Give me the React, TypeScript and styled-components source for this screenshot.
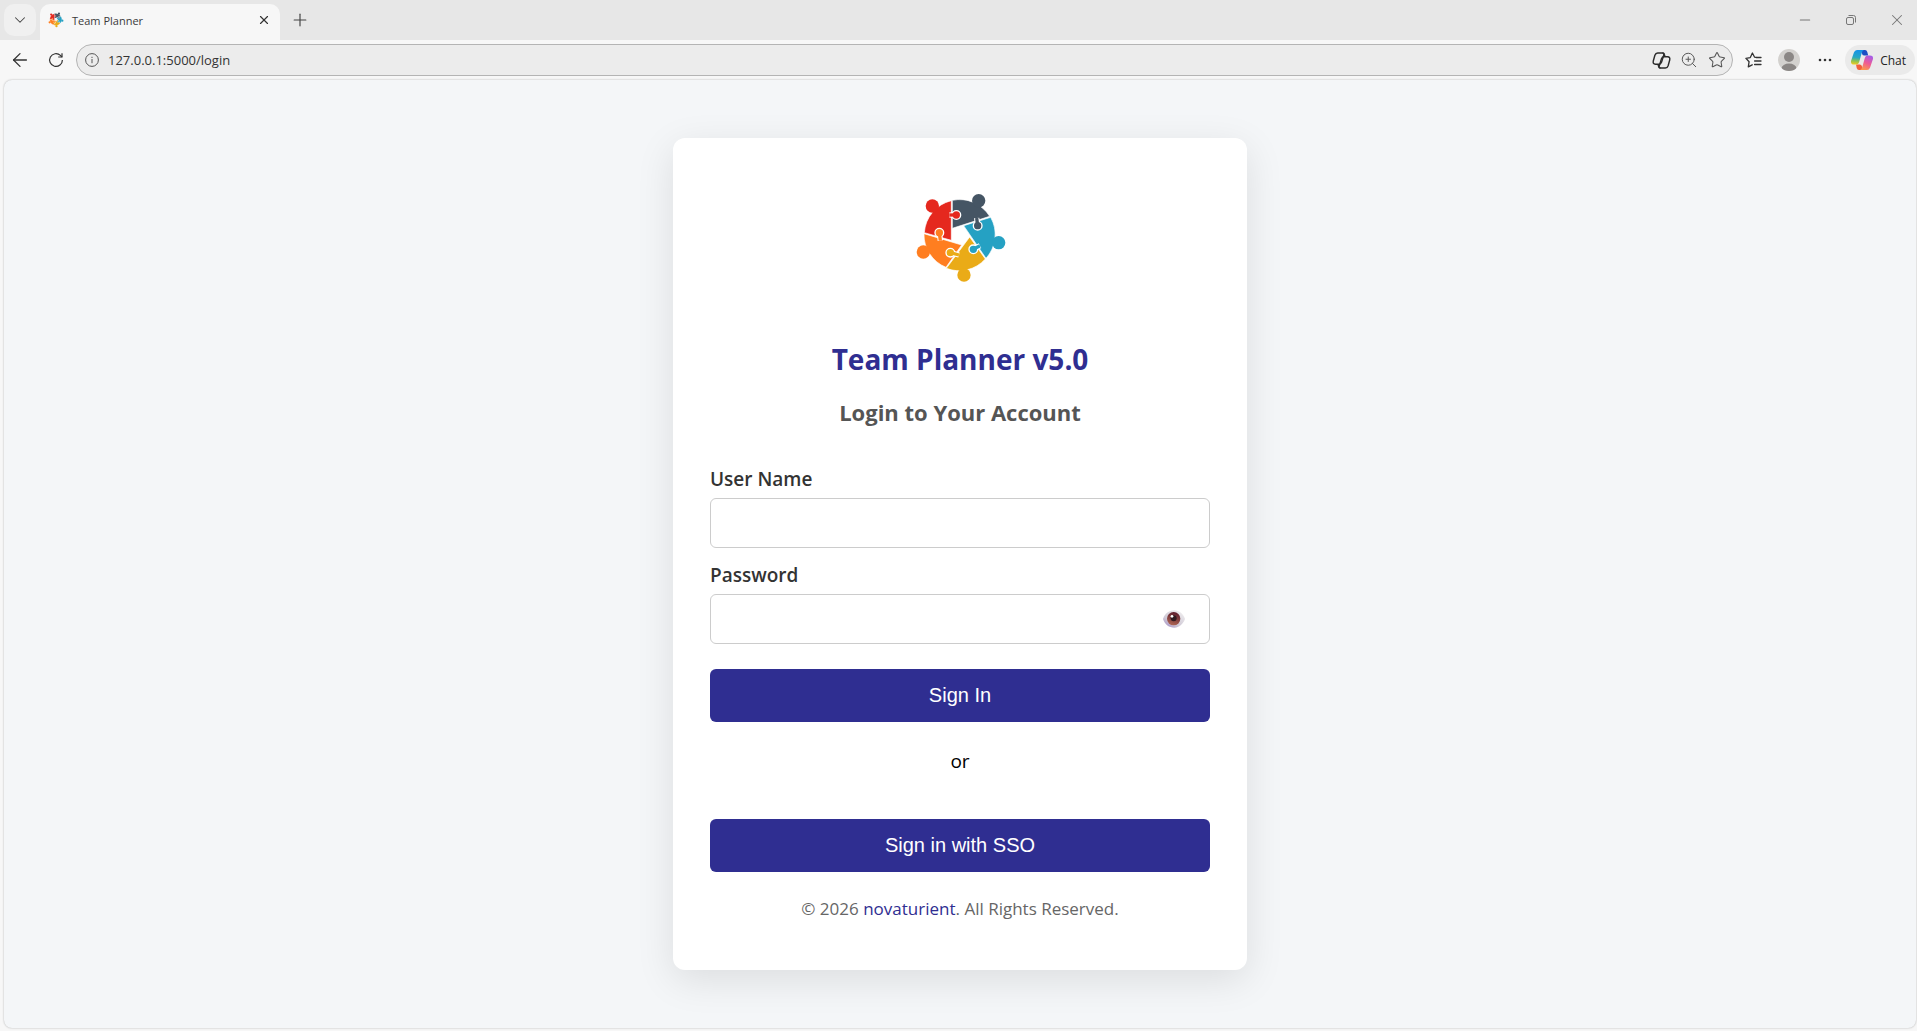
import React, { useState } from "react";
import styled, { createGlobalStyle } from "styled-components";
import { ChevronDown, X, Plus, ArrowLeft, Star, ZoomIn, Minus } from "lucide-react";

const uiFont = '"Open Sans", "Noto Sans", sans-serif';
const brand = "#2f2e91";

const GlobalStyle = createGlobalStyle`
  *, *::before, *::after { box-sizing: border-box; }
  body { margin: 0; background: #f7f7f7; font-family: ${uiFont}; }
  h1, h2, p { margin: 0; }
  button { font: inherit; color: inherit; border: 0; padding: 0; background: none; cursor: pointer; }
  svg { display: block; flex: none; }
`;

const Browser = styled.div`
  display: flex;
  flex-direction: column;
  min-height: 100vh;
`;

const TabStrip = styled.header`
  display: flex;
  align-items: flex-end;
  height: 40px;
  padding-left: 4px;
  background: #e7e7e7;
  color: #444;
`;

const TabMenuButton = styled.button`
  display: grid;
  place-items: center;
  width: 32px;
  height: 32px;
  margin: 0 4px 4px 0;
  border-radius: 10px;
  background: #f0f0f0;
`;

const Tab = styled.div`
  display: flex;
  align-items: center;
  gap: 8px;
  width: 240px;
  height: 36px;
  padding: 0 8px 4px;
  border-radius: 10px 10px 0 0;
  background: #f7f7f7;
  font-size: 11px;
  color: #3b3b3b;
`;

const TabTitle = styled.span`
  flex: 1;
`;

const StripButton = styled.button`
  display: grid;
  place-items: center;
  width: 40px;
  height: 40px;
`;

const TabClose = styled.button`
  display: grid;
  place-items: center;
  width: 16px;
  height: 16px;
  color: #333;
`;

const WindowControls = styled.div`
  display: flex;
  gap: 6px;
  margin-left: auto;
  color: #777;
`;

const Toolbar = styled.nav`
  display: flex;
  align-items: center;
  height: 40px;
  padding: 0 2px 0 4px;
  background: #f7f7f7;
  color: #333;
`;

const ToolButton = styled.button<{ $width?: number }>`
  display: grid;
  place-items: center;
  width: ${(p) => p.$width ?? 36}px;
  height: 32px;
`;

const AddressBar = styled.div`
  display: flex;
  flex: 1;
  align-items: center;
  height: 32px;
  margin-right: 2px;
  padding: 0 1px 0 8px;
  border: 1px solid #b4b4b4;
  border-radius: 16px;
  background: #ececec;
  color: #555;
`;

const AddressInput = styled.input`
  flex: 1;
  min-width: 0;
  margin-left: 9px;
  padding: 0;
  border: 0;
  outline: 0;
  background: transparent;
  font: 13px ${uiFont};
  color: #333;
`;

const ChatButton = styled.button`
  display: flex;
  align-items: center;
  gap: 7px;
  height: 30px;
  margin-left: 2px;
  padding: 0 9px 0 6px;
  border-radius: 15px;
  background: #eaeaea;
  font-size: 12px;
  color: #222;
`;

const Page = styled.main`
  display: flex;
  flex: 1;
  align-items: center;
  justify-content: center;
  margin: 0 1px 3px 4px;
  padding: 24px;
  border-radius: 8px;
  background: #f4f6f8;
  box-shadow: 0 0 2px rgba(0, 0, 0, 0.3);
`;

const Card = styled.section`
  display: flex;
  flex-direction: column;
  align-items: center;
  width: 100%;
  max-width: 574px;
  padding: 38px 37px 49px;
  border-radius: 12px;
  background: #fff;
  box-shadow: 0 10px 38px rgba(0, 0, 0, 0.1);
`;

const Title = styled.h1`
  margin-top: 38px;
  font-size: 28px;
  line-height: 40px;
  font-weight: 700;
  color: ${brand};
`;

const Subtitle = styled.h2`
  margin: 18px 0 38px;
  font-size: 22px;
  line-height: 30px;
  font-weight: 700;
  color: #555;
`;

const Form = styled.form`
  display: flex;
  flex-direction: column;
  align-self: stretch;
`;

const Field = styled.div`
  display: flex;
  flex-direction: column;
  gap: 5px;
  margin-bottom: 13px;
`;

const Label = styled.label`
  font-size: 19px;
  line-height: 28px;
  font-weight: 600;
  color: #333;
`;

const InputShell = styled.div`
  display: flex;
  align-items: center;
  height: 50px;
  padding: 0 24px 0 14px;
  border: 1px solid #ccc;
  border-radius: 6px;
  background: #fff;
`;

const TextInput = styled.input`
  flex: 1;
  min-width: 0;
  height: 100%;
  padding: 0;
  border: 0;
  outline: 0;
  background: transparent;
  font: 20px "Liberation Sans", Arial, sans-serif;
`;

const PrimaryButton = styled.button<{ $gap: number }>`
  align-self: stretch;
  height: 53px;
  margin-top: ${(p) => p.$gap}px;
  border-radius: 6px;
  background: ${brand};
  font: 20px "Liberation Sans", Arial, sans-serif;
  color: #fff;
`;

const Divider = styled.p`
  margin-top: 25px;
  font-size: 19px;
  line-height: 28px;
  color: #000;
`;

const Footer = styled.p`
  margin-top: 25px;
  font-size: 17px;
  line-height: 24px;
  color: #666;
`;

const FooterLink = styled.a`
  color: ${brand};
  text-decoration: none;
`;

const pieces = [
  {
    color: "#e5281e",
    body: "M152 62L152 181L71 158A106 106 0 0 1 152 62Z",
    head: [95, 78],
    tab: [167, 105],
    neck: "M146 105L167 105",
  },
  {
    color: "#455564",
    body: "M155 61A106 106 0 0 1 267 109L155 145Z",
    head: [234, 62],
    tab: [231, 137],
    neck: "M228 114L231 137",
  },
  {
    color: "#25a1c3",
    body: "M189 137L270 112A106 106 0 0 1 256 235Z",
    head: [294, 188],
    tab: [218, 208],
    neck: "M238 197L218 208",
  },
  {
    color: "#eaab17",
    body: "M207 171L254 237A106 106 0 0 1 137 265Z",
    head: [190, 285],
    tab: [149, 218],
    neck: "M175 225L149 218",
  },
  {
    color: "#ff7e20",
    body: "M70 161L183 195L136 262A106 106 0 0 1 70 161Z",
    head: [68, 216],
    tab: [116, 158],
    neck: "M119 182L116 158",
  },
];

function TeamLogo({ size, viewBox }: { size: number; viewBox: string }) {
  return (
    <svg width={size} height={size} viewBox={viewBox} aria-hidden="true">
      {pieces.map((p) => (
        <path key={p.color} d={p.body} fill={p.color} stroke="#fff" strokeWidth="2" />
      ))}
      {pieces.map((p) => (
        <circle key={p.color} cx={p.head[0]} cy={p.head[1]} r="20" fill={p.color} />
      ))}
      {pieces.map((p) => (
        <g key={p.color} fill={p.color}>
          <path d={p.neck} stroke="#fff" strokeWidth="16" />
          <circle cx={p.tab[0]} cy={p.tab[1]} r="13" stroke="#fff" strokeWidth="4" />
          <path d={p.neck} stroke={p.color} strokeWidth="10" />
        </g>
      ))}
    </svg>
  );
}

function EyeIcon() {
  return (
    <svg width="22" height="18" viewBox="0 0 66 54" aria-hidden="true">
      <defs>
        <linearGradient id="eyeWhite" x1="0" y1="1" x2="0.8" y2="0">
          <stop offset="0" stopColor="#9a80c0" />
          <stop offset="0.4" stopColor="#cfc9d6" />
          <stop offset="1" stopColor="#efedee" />
        </linearGradient>
        <linearGradient id="eyeIris" x1="0.3" y1="1" x2="0.6" y2="0">
          <stop offset="0" stopColor="#b06855" />
          <stop offset="1" stopColor="#5c1b2b" />
        </linearGradient>
      </defs>
      <path d="M0 27C6 9 20 1 34 1C49 1 61 12 66 27C60 43 48 53 34 53C18 53 6 44 0 27Z" fill="url(#eyeWhite)" />
      <circle cx="32" cy="26" r="20" fill="url(#eyeIris)" />
      <circle cx="32" cy="25" r="9" fill="#2f1a20" />
      <circle cx="27" cy="19" r="4" fill="#fff" />
    </svg>
  );
}

function ReloadIcon() {
  return (
    <svg width="16" height="16" viewBox="0 0 16 16" fill="none" stroke="currentColor" strokeWidth="1.2" aria-hidden="true">
      <path d="M14.4 8A6.4 6.4 0 1 1 12.4 3.4L14 5" />
      <path d="M14 1.2V5H10.2" />
    </svg>
  );
}

function InfoIcon() {
  return (
    <svg width="14" height="14" viewBox="0 0 14 14" fill="none" stroke="currentColor" aria-hidden="true">
      <circle cx="7" cy="7" r="6.4" />
      <path d="M7 6V10.2M7 3.8V5" />
    </svg>
  );
}

function RestoreIcon() {
  return (
    <svg width="10" height="10" viewBox="0 0 10 10" fill="none" stroke="currentColor" aria-hidden="true">
      <rect x="0.5" y="2.5" width="7" height="7" rx="1.5" />
      <path d="M2.5 0.5H7.5A2 2 0 0 1 9.5 2.5V7.5" />
    </svg>
  );
}

function CopilotOutline() {
  return (
    <svg width="19" height="17" viewBox="0 0 20 18" fill="none" stroke="#2b2b2b" strokeWidth="1.5" strokeLinejoin="round" aria-hidden="true">
      <path d="M6 1H11Q13 1 12.5 3L10 11Q9.3 13 7.3 13H3.5Q.6 13 1.3 9.5L3 3.5Q3.8 1 6 1Z" />
      <path d="M14 17H9Q7 17 7.5 15L10 7Q10.7 5 12.7 5H16.5Q19.4 5 18.7 8.5L17 14.5Q16.2 17 14 17Z" />
      <path d="M11 1Q12.6 1 13 2.6L13.7 5M9 17Q7.4 17 7 15.4L6.3 13" />
    </svg>
  );
}

function FavoritesIcon() {
  return (
    <svg width="17" height="17" viewBox="0 0 17 17" fill="none" stroke="currentColor" strokeWidth="1.3" strokeLinejoin="round" strokeLinecap="round" aria-hidden="true">
      <path d="M11 5.4L9.6 5.2L7.4 1L5.3 5.6L.9 6.3L4.1 9.7L3.3 14.8L7.2 12.8" />
      <path d="M11.2 5.5H16M9.6 9H16M9.6 12.5H16" />
    </svg>
  );
}

function Avatar() {
  return (
    <svg width="22" height="22" viewBox="0 0 22 22" aria-hidden="true">
      <defs>
        <clipPath id="avatarClip">
          <circle cx="11" cy="11" r="11" />
        </clipPath>
      </defs>
      <circle cx="11" cy="11" r="11" fill="#d3d1ce" />
      <g fill="#8b8785" clipPath="url(#avatarClip)">
        <circle cx="11" cy="8" r="5" />
        <ellipse cx="11" cy="19" rx="7.4" ry="4.4" />
      </g>
    </svg>
  );
}

function MoreIcon() {
  return (
    <svg width="14" height="4" viewBox="0 0 14 4" fill="currentColor" aria-hidden="true">
      <circle cx="2" cy="2" r="1.3" />
      <circle cx="7" cy="2" r="1.3" />
      <circle cx="12" cy="2" r="1.3" />
    </svg>
  );
}

function CopilotColor() {
  return (
    <svg width="22" height="20" viewBox="0 0 22 20" aria-hidden="true">
      <defs>
        <linearGradient id="copLeft" x1="0.4" y1="0" x2="0.3" y2="1">
          <stop offset="0" stopColor="#1692e8" />
          <stop offset="0.5" stopColor="#27a8c4" />
          <stop offset="0.75" stopColor="#8cc152" />
          <stop offset="1" stopColor="#f3cb1e" />
        </linearGradient>
        <linearGradient id="copRight" x1="0.7" y1="0" x2="0.3" y2="1">
          <stop offset="0" stopColor="#a55ee8" />
          <stop offset="0.5" stopColor="#ee5a96" />
          <stop offset="1" stopColor="#fb9a4c" />
        </linearGradient>
      </defs>
      <path d="M10.5 0H14Q15.8 0 16.3 2L17.2 5.5H13Q11.3 5.5 10.8 3Z" fill="#1b4fc4" />
      <path d="M5 14.5H9Q10.7 14.5 11.2 17L11.6 20H8Q6.2 20 5.7 18Z" fill="#f2603c" />
      <path d="M6 0H12.9Q11.4 .6 10.7 3L8.1 12.3Q7.4 14.6 5.4 14.6H3Q-.6 14.6 .1 10.7L2.9 2.6Q3.8 0 6 0Z" fill="url(#copLeft)" />
      <path d="M16 20H9.1Q10.6 19.4 11.3 17L13.9 7.7Q14.6 5.4 16.6 5.4H19Q22.6 5.4 21.9 9.3L19.1 17.4Q18.2 20 16 20Z" fill="url(#copRight)" />
    </svg>
  );
}

export default function App() {
  const [showPassword, setShowPassword] = useState(false);

  return (
    <Browser>
      <GlobalStyle />
      <TabStrip>
        <TabMenuButton aria-label="Tab actions">
          <ChevronDown size={18} strokeWidth={1.4} />
        </TabMenuButton>
        <Tab>
          <TeamLogo size={16} viewBox="38 32 286 286" />
          <TabTitle>Team Planner</TabTitle>
          <TabClose aria-label="Close tab">
            <X size={14} strokeWidth={2} />
          </TabClose>
        </Tab>
        <StripButton aria-label="New tab">
          <Plus size={20} strokeWidth={1.4} />
        </StripButton>
        <WindowControls>
          <StripButton aria-label="Minimize">
            <Minus size={16} strokeWidth={1.6} />
          </StripButton>
          <StripButton aria-label="Restore">
            <RestoreIcon />
          </StripButton>
          <StripButton aria-label="Close window">
            <X size={18} strokeWidth={1.4} />
          </StripButton>
        </WindowControls>
      </TabStrip>

      <Toolbar aria-label="Browser toolbar">
        <ToolButton $width={32} aria-label="Back">
          <ArrowLeft size={22} strokeWidth={1.4} />
        </ToolButton>
        <ToolButton $width={40} aria-label="Reload">
          <ReloadIcon />
        </ToolButton>
        <AddressBar>
          <InfoIcon />
          <AddressInput aria-label="Address" defaultValue="127.0.0.1:5000/login" />
          <ToolButton $width={28} aria-label="Copilot">
            <CopilotOutline />
          </ToolButton>
          <ToolButton $width={28} aria-label="Zoom">
            <ZoomIn size={18} strokeWidth={1.3} />
          </ToolButton>
          <ToolButton $width={28} aria-label="Add to favorites">
            <Star size={18} strokeWidth={1.4} />
          </ToolButton>
        </AddressBar>
        <ToolButton aria-label="Favorites">
          <FavoritesIcon />
        </ToolButton>
        <ToolButton aria-label="Profile">
          <Avatar />
        </ToolButton>
        <ToolButton aria-label="More">
          <MoreIcon />
        </ToolButton>
        <ChatButton>
          <CopilotColor />
          Chat
        </ChatButton>
      </Toolbar>

      <Page>
        <Card>
          <TeamLogo size={125} viewBox="-8 -12 375 375" />
          <Title>Team Planner v5.0</Title>
          <Subtitle>Login to Your Account</Subtitle>
          <Form onSubmit={(e: React.FormEvent) => e.preventDefault()}>
            <Field>
              <Label htmlFor="username">User Name</Label>
              <InputShell>
                <TextInput id="username" type="text" autoComplete="username" />
              </InputShell>
            </Field>
            <Field>
              <Label htmlFor="password">Password</Label>
              <InputShell>
                <TextInput
                  id="password"
                  type={showPassword ? "text" : "password"}
                  autoComplete="current-password"
                />
                <button type="button" aria-label="Show password" onClick={() => setShowPassword(!showPassword)}>
                  <EyeIcon />
                </button>
              </InputShell>
            </Field>
            <PrimaryButton $gap={12} type="submit">
              Sign In
            </PrimaryButton>
          </Form>
          <Divider>or</Divider>
          <PrimaryButton $gap={44} type="button">
            Sign in with SSO
          </PrimaryButton>
          <Footer>
            © 2026 <FooterLink href="#">novaturient</FooterLink>. All Rights Reserved.
          </Footer>
        </Card>
      </Page>
    </Browser>
  );
}
